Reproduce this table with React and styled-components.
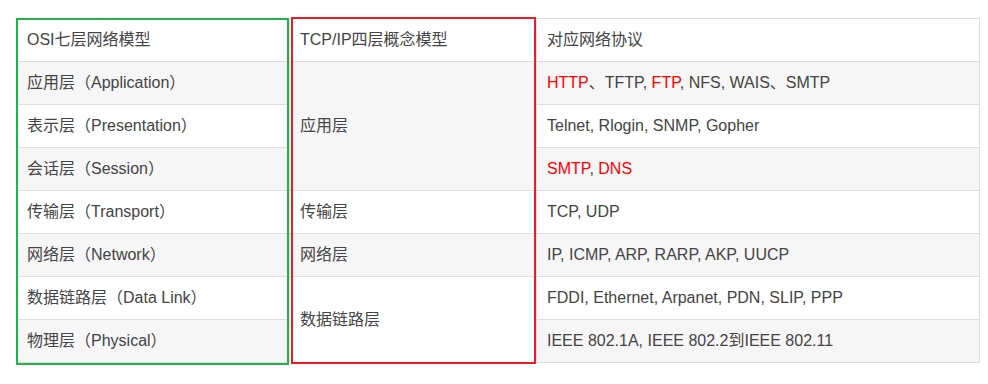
import React from "react";
import styled, { createGlobalStyle } from "styled-components";

const GlobalStyle = createGlobalStyle`
  body {
    margin: 0;
    background: #fff;
    font-family: "Liberation Sans", Arial, "Noto Sans CJK SC", sans-serif;
  }
`;

const rows = [
  {
    osi: "应用层（Application）",
    tcp: "应用层",
    span: 3,
    proto: [
      { t: "HTTP", red: true },
      { t: "、TFTP, " },
      { t: "FTP", red: true },
      { t: ", NFS, WAIS、SMTP" },
    ],
  },
  { osi: "表示层（Presentation）", proto: [{ t: "Telnet, Rlogin, SNMP, Gopher" }] },
  {
    osi: "会话层（Session）",
    proto: [{ t: "SMTP", red: true }, { t: ", " }, { t: "DNS", red: true }],
  },
  { osi: "传输层（Transport）", tcp: "传输层", span: 1, proto: [{ t: "TCP, UDP" }] },
  {
    osi: "网络层（Network）",
    tcp: "网络层",
    span: 1,
    proto: [{ t: "IP, ICMP, ARP, RARP, AKP, UUCP" }],
  },
  {
    osi: "数据链路层（Data Link）",
    tcp: "数据链路层",
    span: 2,
    proto: [{ t: "FDDI, Ethernet, Arpanet, PDN, SLIP, PPP" }],
  },
  {
    osi: "物理层（Physical）",
    proto: [{ t: "IEEE 802.1A, IEEE 802.2到IEEE 802.11" }],
  },
];

const App = () => {
  return (
    <Page>
      <GlobalStyle />
      <Wrap>
        <Table>
          <colgroup>
            <col style={{ width: 273 }} />
            <col style={{ width: 247 }} />
            <col style={{ width: 443 }} />
          </colgroup>
          <tbody>
            <Row>
              <Cell>OSI七层网络模型</Cell>
              <Cell>TCP/IP四层概念模型</Cell>
              <Cell>对应网络协议</Cell>
            </Row>
            {rows.map((r, i) => (
              <Row key={i}>
                <Cell>{r.osi}</Cell>
                {r.tcp && <Cell rowSpan={r.span}>{r.tcp}</Cell>}
                <Cell>
                  {r.proto.map((p, j) =>
                    p.red ? <Red key={j}>{p.t}</Red> : <span key={j}>{p.t}</span>
                  )}
                </Cell>
              </Row>
            ))}
          </tbody>
        </Table>
        <Mark $color="#22b14c" $left={0} $top={0} $width={273} $height={347} />
        <Mark $color="#ed1c24" $left={275} $top={-1} $width={245} $height={347} />
      </Wrap>
    </Page>
  );
};

export default App;

const Page = styled.div`
  padding: 18px 9px 20px 16px;
`;

const Wrap = styled.div`
  position: relative;
  width: 963px;
`;

const Table = styled.table`
  width: 963px;
  table-layout: fixed;
  border-collapse: collapse;
  font-size: 16px;
  color: #444;
`;

const Row = styled.tr`
  background: #fff;
  &:nth-child(even) {
    background: #f6f6f6;
  }
`;

const Cell = styled.td`
  border: 1px solid #dddddd;
  padding: 10px 10px;
  line-height: 22px;
  text-align: left;
  vertical-align: middle;
  white-space: nowrap;
`;

const Red = styled.span`
  color: #ff0000;
`;

const Mark = styled.div`
  position: absolute;
  left: ${(p) => p.$left}px;
  top: ${(p) => p.$top}px;
  width: ${(p) => p.$width}px;
  height: ${(p) => p.$height}px;
  border: 2px solid ${(p) => p.$color};
  box-sizing: border-box;
  pointer-events: none;
`;
